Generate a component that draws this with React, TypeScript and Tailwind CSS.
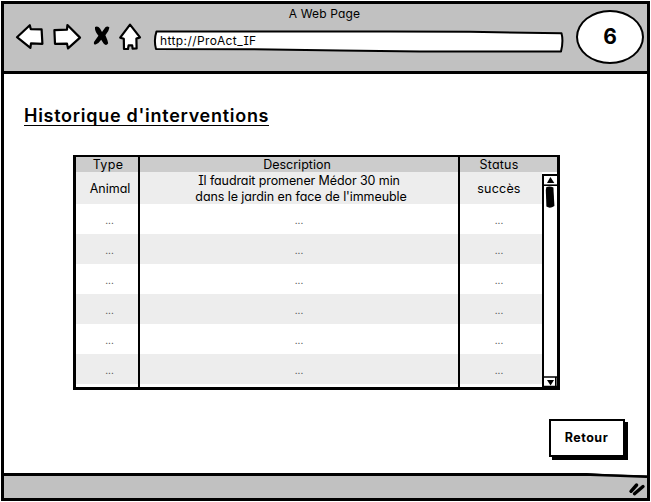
import React from "react";

const rows = [
  { type: "...", description: "...", status: "..." },
  { type: "...", description: "...", status: "..." },
  { type: "...", description: "...", status: "..." },
  { type: "...", description: "...", status: "..." },
  { type: "...", description: "...", status: "..." },
  { type: "...", description: "...", status: "..." },
];

function NavIcons() {
  return (
    <svg width="130" height="34" viewBox="14 20 130 34" className="block" aria-hidden="true">
      <g fill="white" stroke="black" strokeWidth="2.2" strokeLinejoin="round">
        <path d="M17 37.2 L29.8 25.2 L30.8 29.2 L41.6 29.3 L42.4 43.8 L31 43.4 L30.4 47.8 Z" />
        <path d="M54.4 30.2 L67 29.6 L67.4 25 L80 37.6 L68 48.4 L67 43.6 L55 43.8 Z" />
        <path d="M130 24.6 L140 37.4 L136.4 38.6 L136.6 48.4 L132.6 48.6 L132.2 45.4 L128.6 45.4 L128 49 L124 49 L123.8 38.8 L120.2 37.6 Z" />
      </g>
      <path
        d="M95 27 Q98 25.6 100 28.6 L102 32 L105.4 27.2 Q107.6 25.6 109.4 27.6 Q109 31.4 105.4 35.2 Q107.6 40 108.2 43.2 Q106.2 46.4 103.6 43.6 L101.2 39.8 Q98.6 43.6 95.6 44.6 Q93.4 44.8 94 42 L98.4 35.8 Q94.4 31 95 27 Z"
        fill="black"
      />
    </svg>
  );
}

function AddressBar() {
  return (
    <div className="relative h-6 w-[412px]">
      <svg width="412" height="24" viewBox="153 29 412 24" className="absolute inset-0" aria-hidden="true">
        <path
          d="M156.5 31.4 L330 31.6 L390 31.6 L470 31.8 L561.5 33.2 Q563.6 41 561 51.4 L420 51.4 L340 50.4 L250 49.2 L156 49 Q153.6 40 156.5 31.4 Z"
          fill="white"
          stroke="black"
          strokeWidth="2"
          strokeLinejoin="round"
        />
      </svg>
      <span className="relative block pl-[7px] pt-[4px] text-[12px] leading-4 tracking-[0.4px]">http://ProAct_IF</span>
    </div>
  );
}

function ScrollBar() {
  return (
    <div className="flex w-[15px] flex-col pt-[2px]">
      <div className="flex flex-1 flex-col justify-between border-l-2 border-t-2 border-black bg-white">
        <svg width="13" height="34" viewBox="544 176 13 34" className="block" aria-hidden="true">
          <path d="M550.4 177 L554.3 183 H547 Z" />
          <path d="M544 185.2 H557" stroke="black" strokeWidth="1.6" />
          <path d="M546.4 187 Q550 185.6 553.4 187.6 L554.4 206 Q550 209 546.4 206.6 L545.8 190 Z" />
        </svg>
        <svg width="13" height="12" viewBox="544 375 13 12" className="block" aria-hidden="true">
          <path d="M544 377 H557 M555.8 377 V387 M544 386.5 H557" stroke="black" strokeWidth="1.6" />
          <path d="M547 380 H554 L550.6 385.6 Z" />
        </svg>
      </div>
    </div>
  );
}

function HistoryTable() {
  return (
    <div className="ml-[69px] mt-[29px] flex h-[235px] w-[487px] flex-col border-[3px] border-t-2 border-black bg-white text-[12.5px] leading-4">
      <div className="flex h-[15px] shrink-0 bg-[#cccccc] text-center leading-[16px]">
        <div className="w-[64px] border-r-2 border-black pl-[2px] tracking-[0.3px]">Type</div>
        <div className="w-[320px] border-r-2 border-black pr-[4px]">Description</div>
        <div className="w-[78px] tracking-[0.2px]">Status</div>
      </div>
      <div className="flex min-h-0 flex-1">
        <div className="flex flex-1 flex-col text-center">
          <div className="flex h-8 bg-[#ededed]">
            <div className="flex w-[64px] items-center justify-center border-r-2 border-black pl-[6px] pt-px">Animal</div>
            <div className="w-[320px] border-r-2 border-black">
              <div className="pt-px tracking-[-0.1px]">Il faudrait promener Médor 30 min</div>
              <div className="pl-[4px] tracking-[-0.08px]">dans le jardin en face de l'immeuble</div>
            </div>
            <div className="flex w-[78px] items-center justify-center pt-px tracking-[0.2px]">succès</div>
          </div>
          {rows.map((row, i) => (
            <div key={i} className="flex h-[30px] text-[10px] leading-[33px] text-[#444] odd:bg-[#ededed]">
              <div className="w-[64px] border-r-2 border-black pl-[5px]">{row.type}</div>
              <div className="w-[320px] border-r-2 border-black">{row.description}</div>
              <div className="w-[78px]">{row.status}</div>
            </div>
          ))}
          <div className="flex flex-1">
            <div className="w-[64px] border-r-2 border-black" />
            <div className="w-[320px] border-r-2 border-black" />
          </div>
        </div>
        <ScrollBar />
      </div>
    </div>
  );
}

export default function App() {
  return (
    <div className="h-[502px] w-[651px] overflow-hidden bg-white pl-px pt-px font-['Inter','Open_Sans',sans-serif] text-black [font-feature-settings:'cv11','cv08','ss02'_0]">
      <div className="flex h-[500px] w-[649px] flex-col border-[3px] border-black">
        <header className="flex h-[70px] shrink-0 border-b-[3px] border-black bg-[#c1c1c1]">
          <div className="pl-[10px] pt-4">
            <NavIcons />
          </div>
          <div className="ml-[9px] w-[412px]">
            <div className="pr-[69px] pt-px text-center text-[12px] leading-[18px] tracking-[0.15px]">A Web Page</div>
            <div className="pt-[6px]">
              <AddressBar />
            </div>
          </div>
          <div className="ml-[11px] mt-[6px] flex h-[54px] w-[68px] shrink-0 items-center justify-center rounded-[50%] border-2 border-black bg-white text-[21px] font-bold">
            6
          </div>
        </header>
        <main className="flex-1">
          <h1 className="ml-5 mt-[31px] h-[21px] w-[245px] whitespace-nowrap border-b border-black text-[18px] font-semibold leading-[21px] tracking-[0.72px]">
            Historique d'interventions
          </h1>
          <HistoryTable />
          <button className="ml-[545px] mt-[29px] block h-[38px] w-[76px] border-2 border-black bg-white pr-px pt-px text-[12.5px] font-bold tracking-[0.5px] shadow-[3px_3px_0_0_#000]">
            Retour
          </button>
        </main>
        <footer className="relative h-[25px] shrink-0 border-t-[3px] border-black bg-[#c1c1c1]">
          <svg width="643" height="28" viewBox="4 473 643 28" className="absolute left-0 -top-[3px]" aria-hidden="true">
            <path d="M570 472 H647 V475.5 L610 474.4 Z" fill="white" />
            <path d="M555 474.3 L590 474.8 L620 475.8 L647 476.7" stroke="black" strokeWidth="2.4" fill="none" />
            <path d="M631 491.3 L636.6 485 M634.5 493.7 L643 486.5" stroke="black" strokeWidth="3.4" strokeLinecap="round" />
          </svg>
        </footer>
      </div>
    </div>
  );
}
